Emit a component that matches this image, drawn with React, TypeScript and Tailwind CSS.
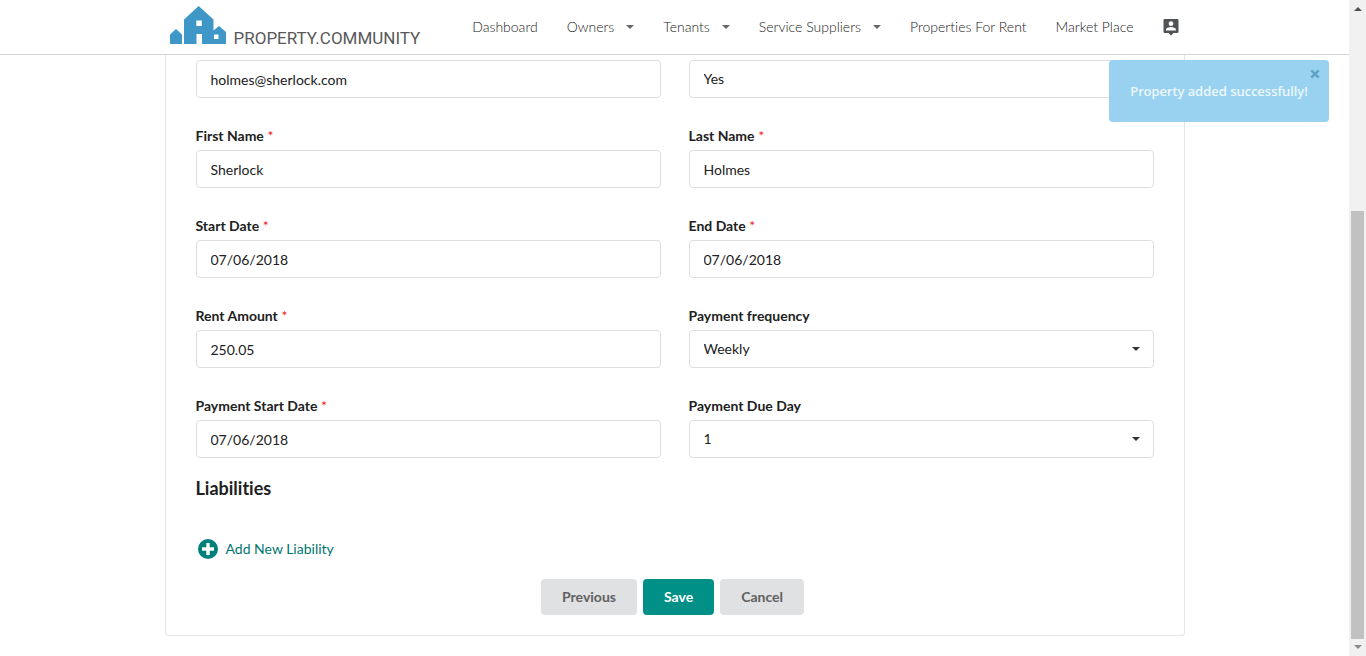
import type { ReactNode } from 'react';

const borderTone = 'border-[#dededf]';

function Caret({ className }: { className: string }) {
  return (
    <svg viewBox="0 0 8 4" aria-hidden="true" className={className}>
      <path d="M0 0h8L4 4z" fill="currentColor" />
    </svg>
  );
}

function Logo() {
  return (
    <a href="#home" className="mb-1 flex items-end gap-2" aria-label="Property.Community">
      <svg viewBox="0 0 56 38" className="h-[38px] w-14" aria-hidden="true">
        <g fill="#3e97c7" fillRule="evenodd">
          <path d="M0 38V28.500L6 23l6 5.500V38z" />
          <path d="M14 38V13.500L28.700 0 43.500 13.500V24.500l5.500-4.500 7 6V38H32V28h-5.500v10zM26.300 14.500v5.500h5.500v-5.500zM44 28.500v4.500h4.500v-4.500z" />
        </g>
      </svg>
      <span className="font-[Roboto,sans-serif] text-[17px] leading-3 text-[#58585a]">PROPERTY.COMMUNITY</span>
    </a>
  );
}

function NavMenu({ children }: { children: ReactNode }) {
  return (
    <button type="button" className="flex items-center gap-3">
      {children}
      <Caret className="h-1 w-2 text-[#666]" />
    </button>
  );
}

function Header() {
  return (
    <header className="border-b border-[#d4d4d5]">
      <div className="mx-auto flex h-[54px] max-w-[1020px] items-center pr-1.5 pl-[5px]">
        <Logo />
        <nav className="ml-auto flex items-center gap-[29px] text-sm font-light whitespace-nowrap text-[#222]">
          <a href="#dashboard">Dashboard</a>
          <NavMenu>Owners</NavMenu>
          <NavMenu>Tenants</NavMenu>
          <NavMenu>Service Suppliers</NavMenu>
          <a href="#rent">Properties For Rent</a>
          <a href="#market">Market Place</a>
          <a href="#account" aria-label="Account">
            <svg viewBox="0 0 16 17" className="h-[17px] w-4" aria-hidden="true">
              <path
                fill="#505356"
                fillRule="evenodd"
                d="M1.800 0h12.400Q15.500 0 15.500 1.300v11.400q0 1.300-1.300 1.300H10.500L8 16.500 5.500 14H1.800Q.5 14 .5 12.700V1.300Q.5 0 1.800 0zM8 2.300a2.400 2.400 0 1 0 0 4.800 2.400 2.400 0 0 0 0-4.800zM3 11.500h10v-.8c0-1.700-3.300-2.600-5-2.600s-5 .9-5 2.600z"
              />
            </svg>
          </a>
        </nav>
      </div>
    </header>
  );
}

type FieldProps = {
  id: string;
  label: string;
  value: string;
  required?: boolean;
  labelHidden?: boolean;
  select?: boolean;
};

function Field({ id, label, value, required, labelHidden, select }: FieldProps) {
  return (
    <div className="flex flex-col gap-1.5">
      {!labelHidden && (
        <label htmlFor={id} className="text-sm leading-4 font-bold text-[#212121]">
          {label}
          {required && <span className="font-normal text-[#f01818]"> *</span>}
        </label>
      )}
      {select ? (
        <div className="relative">
          <select
            id={id}
            aria-label={labelHidden ? label : undefined}
            defaultValue={value}
            className={`h-[38px] w-full appearance-none rounded border bg-white px-3.5 text-sm text-[#212121] ${borderTone}`}
          >
            <option>{value}</option>
          </select>
          {!labelHidden && <Caret className="pointer-events-none absolute top-[17px] right-3.5 h-1 w-2 text-[#333]" />}
        </div>
      ) : (
        <input
          id={id}
          aria-label={labelHidden ? label : undefined}
          defaultValue={value}
          className={`h-[38px] w-full rounded border bg-white px-3.5 text-sm text-[#212121] ${borderTone}`}
        />
      )}
    </div>
  );
}

const fields: FieldProps[] = [
  { id: 'email', label: 'Tenant Email', value: 'holmes@sherlock.com', labelHidden: true },
  { id: 'main', label: 'Is Main Tenant', value: 'Yes', labelHidden: true, select: true },
  { id: 'first', label: 'First Name', value: 'Sherlock', required: true },
  { id: 'last', label: 'Last Name', value: 'Holmes', required: true },
  { id: 'start', label: 'Start Date', value: '07/06/2018', required: true },
  { id: 'end', label: 'End Date', value: '07/06/2018', required: true },
  { id: 'rent', label: 'Rent Amount', value: '250.05', required: true },
  { id: 'frequency', label: 'Payment frequency', value: 'Weekly', select: true },
  { id: 'payment-start', label: 'Payment Start Date', value: '07/06/2018', required: true },
  { id: 'due', label: 'Payment Due Day', value: '1', select: true },
];

function Toast() {
  return (
    <div
      role="status"
      className="absolute top-[60px] right-5 z-10 flex h-[62px] w-[220px] items-center justify-center rounded bg-[#99d2f0] pt-0.5"
    >
      <p className="font-['Noto_Sans',sans-serif] text-[13px] font-medium text-white/85">Property added successfully!</p>
      <button type="button" aria-label="Close" className="absolute top-[9px] right-[9px]">
        <svg viewBox="0 0 10 10" className="size-2.5" aria-hidden="true">
          <path d="M1.300 1.300l7.400 7.400M8.700 1.300L1.300 8.700" stroke="#5fa3c6" strokeWidth="2.600" />
        </svg>
      </button>
    </div>
  );
}

function ScrollRail() {
  return (
    <div aria-hidden="true" className="flex w-[17px] flex-col items-center bg-[#f1f1f1] py-[7px]">
      <Caret className="h-1 w-2 rotate-180 text-[#505050]" />
      <div className="mt-[200px] mb-1.5 w-[13px] flex-1 bg-[#c1c1c1]" />
      <Caret className="h-1 w-2 text-[#8a8a8a]" />
    </div>
  );
}

export default function App() {
  return (
    <div className="flex min-h-screen bg-white font-[Lato,sans-serif] text-[#212121] [font-variant-ligatures:none]">
      <div className="relative flex-1">
        <Header />
        <Toast />
        <main className="mx-auto mb-5 max-w-[1020px] rounded-b border border-t-0 border-[#e5e5e6] px-[30px] pt-[5px] pb-5">
          <form>
            <div className="grid grid-cols-2 gap-x-7 gap-y-[30px]">
              {fields.map((field) => (
                <Field key={field.id} {...field} />
              ))}
            </div>
            <h2 className="mt-[18px] text-lg leading-6 font-bold">Liabilities</h2>
            <button type="button" className="mt-[39px] ml-0.5 flex items-center gap-2 text-sm leading-5 text-[#00756f]">
              <svg viewBox="0 0 20 20" className="size-5" aria-hidden="true">
                <circle cx="10" cy="10" r="10" fill="#00807a" />
                <path d="M10 4v12M4 10h12" stroke="#fff" strokeWidth="3.400" />
              </svg>
              Add New Liability
            </button>
            <div className="mt-5 mr-1 flex justify-center gap-1.5 text-sm font-bold">
              <button type="button" className="h-9 rounded bg-[#e0e1e2] px-[21px] text-[#5f6061]">Previous</button>
              <button type="submit" className="h-9 rounded bg-[#009087] px-[21px] text-white">Save</button>
              <button type="button" className="h-9 rounded bg-[#e0e1e2] px-[21px] text-[#5f6061]">Cancel</button>
            </div>
          </form>
        </main>
      </div>
      <ScrollRail />
    </div>
  );
}
